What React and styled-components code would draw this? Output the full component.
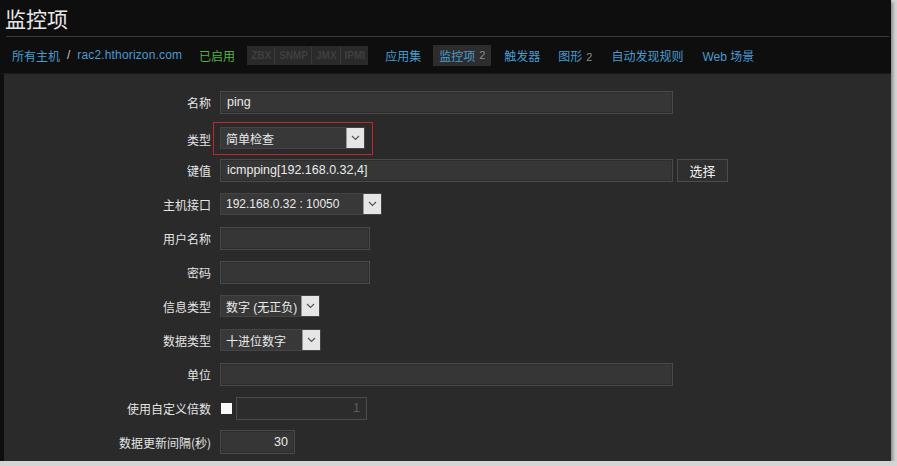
import styled, { createGlobalStyle } from 'styled-components';

const GlobalStyle = createGlobalStyle`
  html, body {
    margin: 0;
    padding: 0;
    background: #d4d4d4;
  }
  body {
    font-family: "Liberation Sans", "Noto Sans CJK SC", sans-serif;
    font-size: 12px;
  }
`;

const Frame = styled.div`
  width: 891px;
  height: 461px;
  background: #0e0e0e;
  overflow: hidden;
  display: flex;
  flex-direction: column;
  box-shadow: 2px 2px 3px rgba(0, 0, 0, 0.35);
`;

const Header = styled.div`
  padding: 4px 8px 0 0;
  height: 32px;
  border-bottom: 1px solid #3a3a3a;
  margin: 0 2px 0 6px;
`;

const Title = styled.h1`
  margin: 0 0 0 -1px;
  font-family: "Noto Sans CJK SC", sans-serif;
  font-weight: 400;
  font-size: 21px;
  line-height: 28px;
  color: #e8e8e8;
`;

const Nav = styled.div`
  display: flex;
  align-items: center;
  height: 36px;
  padding-left: 12px;
  border-bottom: 1px solid #1a1a1a;
`;

const NavLink = styled.span`
  color: ${p => (p.$green ? '#52b24a' : '#4a9bd0')};
  font-family: "Liberation Sans", "Noto Sans CJK SC", sans-serif;
  font-size: 12px;
  margin-right: ${p => p.$gap ?? 18}px;
  white-space: nowrap;
  letter-spacing: ${p => (p.$wide ? '0.15px' : 'normal')};
`;

const Sep = styled.span`
  color: #c8c8c8;
  margin-right: 7px;
`;

const Badges = styled.div`
  display: flex;
  background: #2a2a2a;
  height: 19px;
  align-items: center;
  margin-right: 17px;
`;

const Badge = styled.span`
  color: #3f3f3f;
  font-size: 10px;
  font-weight: 700;
  padding: 0 3px 0 4px;
  line-height: 17px;
  border-left: ${p => (p.$first ? 'none' : '1px solid #3a3a3a')};
`;

const Tab = styled.span`
  display: flex;
  align-items: center;
  height: 21px;
  padding: 0 6px;
  margin-right: 13px;
  background: ${p => (p.$active ? '#2d2d2d' : 'transparent')};
  color: #4a9bd0;
  white-space: nowrap;
`;

const Count = styled.span`
  color: #8c8c8c;
  margin-left: 4px;
  font-size: 11px;
`;

const FormArea = styled.div`
  flex: 1;
  background: #2a2a2a;
  margin-left: 4px;
  padding-top: 16px;
  display: flex;
  flex-direction: column;
  gap: 10px;
`;

const Row = styled.div`
  display: grid;
  grid-template-columns: 207px auto;
  column-gap: 9px;
  align-items: center;
  height: 24px;
`;

const Label = styled.label`
  text-align: right;
  color: #e4e4e4;
  font-family: "Noto Sans CJK SC", sans-serif;
  font-size: 12px;
  white-space: nowrap;
`;

const Field = styled.div`
  display: flex;
  align-items: center;
  gap: 4px;
`;

const Input = styled.div`
  box-sizing: border-box;
  width: ${p => p.$w}px;
  height: ${p => p.$h || 23}px;
  background: ${p => (p.$disabled ? '#2c2c2c' : '#363636')};
  border: 1px solid #4a4a4a;
  box-shadow: inset 0 0 0 1px #2e2e2e;
  color: ${p => (p.$disabled ? '#5c5c5c' : '#eaeaea')};
  font-family: "Liberation Sans", "Noto Sans CJK SC", sans-serif;
  font-size: 12.5px;
  display: flex;
  align-items: center;
  justify-content: ${p => (p.$right ? 'flex-end' : 'flex-start')};
  padding: 0 6px;
  white-space: nowrap;
`;

const Select = styled.div`
  box-sizing: border-box;
  width: ${p => p.$w}px;
  height: 22px;
  background: #383838;
  border: 1px solid #444;
  display: flex;
  align-items: center;
  justify-content: space-between;
  color: #eaeaea;
  font-family: "Liberation Sans", "Noto Sans CJK SC", sans-serif;
  font-size: 12px;
  padding-left: 5px;
  white-space: nowrap;
  overflow: hidden;
`;

const Arrow = styled.span`
  flex: none;
  width: 17px;
  height: 20px;
  background: #e6e6e6;
  border-left: 1px solid #999;
  display: flex;
  align-items: center;
  justify-content: center;
`;

const Highlight = styled.div`
  border: 1px solid #c0262a;
  padding: 4px 7px 5px 6px;
  margin-left: -7px;
  margin-top: -2px;
`;

const Button = styled.div`
  box-sizing: border-box;
  height: 23px;
  width: 51px;
  border: 1px solid #4c4c4c;
  background: #2f2f2f;
  color: #f0f0f0;
  font-family: "Noto Sans CJK SC", sans-serif;
  font-size: 13px;
  display: flex;
  align-items: center;
  justify-content: center;
`;

const Check = styled.span`
  width: 11px;
  height: 11px;
  background: #fafafa;
  margin-left: 1px;
`;

const Chevron = () => (
  <svg width="9" height="6" viewBox="0 0 9 6">
    <path d="M1 1 L4.5 4.5 L8 1" fill="none" stroke="#555" strokeWidth="1.2" />
  </svg>
);

function DropDown({ w, children }) {
  return (
    <Select $w={w}>
      <span>{children}</span>
      <Arrow><Chevron /></Arrow>
    </Select>
  );
}

export default function App() {
  return (
    <>
      <GlobalStyle />
      <Frame>
        <Header>
          <Title>监控项</Title>
        </Header>
        <Nav>
          <NavLink $gap={7}>所有主机</NavLink>
          <Sep>/</Sep>
          <NavLink $gap={17} $wide>rac2.hthorizon.com</NavLink>
          <NavLink $green $gap={12}>已启用</NavLink>
          <Badges>
            <Badge $first>ZBX</Badge>
            <Badge>SNMP</Badge>
            <Badge>JMX</Badge>
            <Badge>IPMI</Badge>
          </Badges>
          <NavLink $gap={12}>应用集</NavLink>
          <Tab $active>监控项<Count>2</Count></Tab>
          <NavLink $gap={18}>触发器</NavLink>
          <NavLink $gap={19}>图形<Count>2</Count></NavLink>
          <NavLink $gap={19}>自动发现规则</NavLink>
          <NavLink>Web 场景</NavLink>
        </Nav>
        <FormArea>
          <Row>
            <Label>名称</Label>
            <Field><Input $w={453}>ping</Input></Field>
          </Row>
          <Row>
            <Label>类型</Label>
            <Field>
              <Highlight>
                <DropDown w={145}>简单检查</DropDown>
              </Highlight>
            </Field>
          </Row>
          <Row>
            <Label>键值</Label>
            <Field>
              <Input $w={453}>icmpping[192.168.0.32,4]</Input>
              <Button>选择</Button>
            </Field>
          </Row>
          <Row>
            <Label>主机接口</Label>
            <Field><DropDown w={162}>192.168.0.32 : 10050</DropDown></Field>
          </Row>
          <Row>
            <Label>用户名称</Label>
            <Field><Input $w={150} /></Field>
          </Row>
          <Row>
            <Label>密码</Label>
            <Field><Input $w={150} /></Field>
          </Row>
          <Row>
            <Label>信息类型</Label>
            <Field><DropDown w={100}>数字 (无正负)</DropDown></Field>
          </Row>
          <Row>
            <Label>数据类型</Label>
            <Field><DropDown w={101}>十进位数字</DropDown></Field>
          </Row>
          <Row>
            <Label>单位</Label>
            <Field><Input $w={453} /></Field>
          </Row>
          <Row>
            <Label>使用自定义倍数</Label>
            <Field>
              <Check />
              <Input $w={131} $disabled $right>1</Input>
            </Field>
          </Row>
          <Row>
            <Label>数据更新间隔(秒)</Label>
            <Field><Input $w={75} $h={24} $right>30</Input></Field>
          </Row>
        </FormArea>
      </Frame>
    </>
  );
}
